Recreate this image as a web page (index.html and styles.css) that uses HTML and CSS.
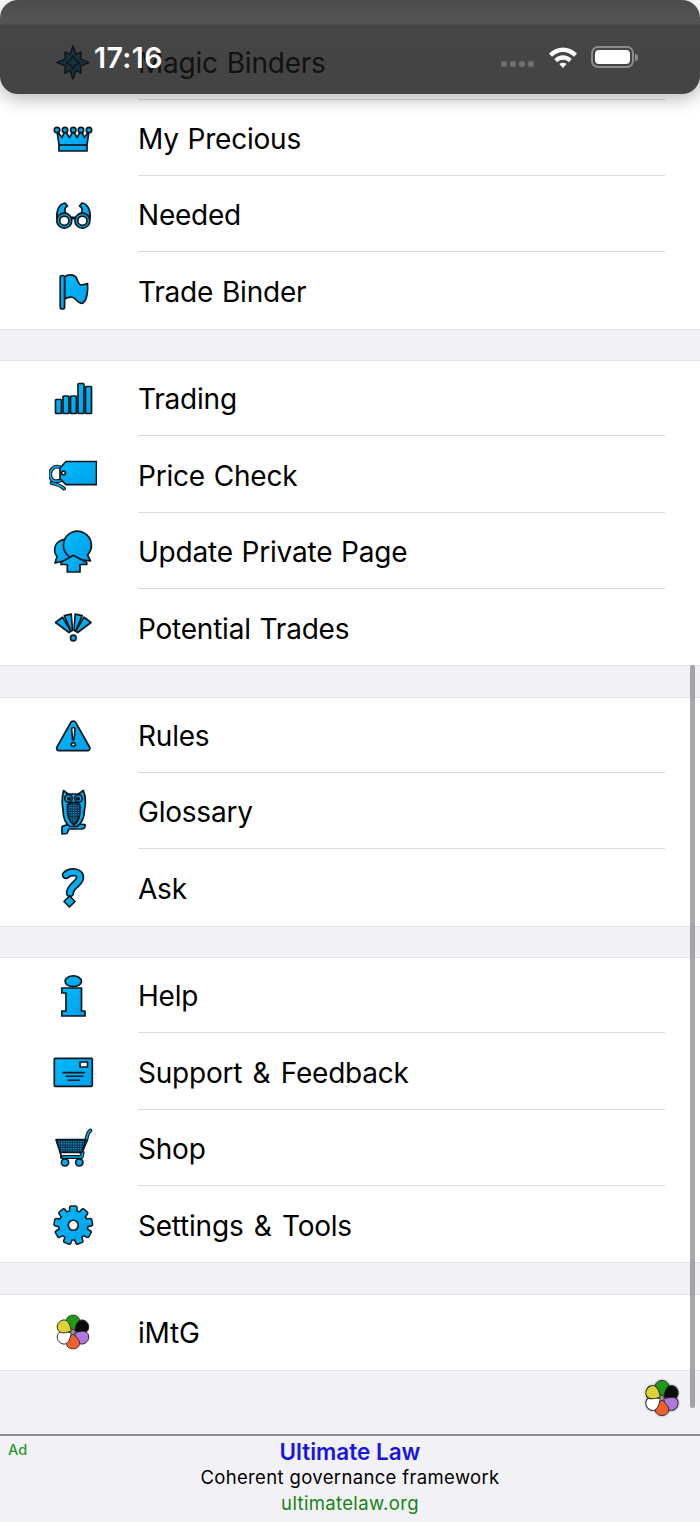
FILE: index.html
```html
<!DOCTYPE html>
<html lang="en">

<head>
  <meta charset="UTF-8">
  <meta name="viewport" content="width=device-width, initial-scale=1.0">
  <title>iMtG Menu</title>
  <link rel="stylesheet" href="styles.css">
</head>

<body>
  <!-- shared paint and shapes for the icons -->
  <svg class="defs" width="0" height="0">
    <defs>
      <linearGradient id="blue" x1="0" y1="0" x2="1" y2="1">
        <stop offset="0" stop-color="#00bcfd" />
        <stop offset="1" stop-color="#009fe8" />
      </linearGradient>
      <pattern id="hatch" width="2.4" height="2.4" patternUnits="userSpaceOnUse">
        <rect width="2.4" height="2.4" fill="#0a2c40" />
        <rect width="1.3" height="1.3" fill="#00a8f0" />
      </pattern>
      <path id="petal" d="M0 -2 C-2.5 -4.5 -6.8 -7.5 -6.8 -11.8 C-6.8 -15 -3.3 -17.6 0 -17.6 C3.3 -17.6 6.8 -15 6.8 -11.8 C6.8 -7.5 2.5 -4.5 0 -2 Z" />
      <symbol id="flower" viewBox="-18 -18 36 36">
        <circle r="3" fill="#999" />
        <g stroke="#222" stroke-width="0.9">
          <use href="#petal" fill="#1f9a12" />
          <use href="#petal" fill="#0c0c0c" transform="rotate(60)" />
          <use href="#petal" fill="#b078de" transform="rotate(120)" />
          <use href="#petal" fill="#f0602a" transform="rotate(180)" />
          <use href="#petal" fill="#ffffff" transform="rotate(240)" />
          <use href="#petal" fill="#dcd232" transform="rotate(300)" />
        </g>
      </symbol>
      <g id="cog">
        <circle cx="24.3" cy="24.25" r="14" />
        <g id="cogTeeth">
          <rect x="21.3" y="5.8" width="6" height="8" rx="1" />
          <rect x="21.3" y="5.8" width="6" height="8" rx="1" transform="rotate(40 24.3 24.25)" />
          <rect x="21.3" y="5.8" width="6" height="8" rx="1" transform="rotate(80 24.3 24.25)" />
          <rect x="21.3" y="5.8" width="6" height="8" rx="1" transform="rotate(120 24.3 24.25)" />
          <rect x="21.3" y="5.8" width="6" height="8" rx="1" transform="rotate(160 24.3 24.25)" />
          <rect x="21.3" y="5.8" width="6" height="8" rx="1" transform="rotate(200 24.3 24.25)" />
          <rect x="21.3" y="5.8" width="6" height="8" rx="1" transform="rotate(240 24.3 24.25)" />
          <rect x="21.3" y="5.8" width="6" height="8" rx="1" transform="rotate(280 24.3 24.25)" />
          <rect x="21.3" y="5.8" width="6" height="8" rx="1" transform="rotate(320 24.3 24.25)" />
        </g>
      </g>
    </defs>
  </svg>

  <main class="menu">
    <section class="group firstGroup">
      <div class="row">
        <svg class="icon" viewBox="0 0 48 48">
          <polygon points="24,8 27,16.5 32,14 31.5,21 40,24.5 31.5,28 32,35 27,32.5 24,41 21,32.5 16,35 16.5,28 8,24.5 16.5,21 16,14 21,16.5" />
          <polygon points="24,18 26.5,22 31,24.5 26.5,27 24,31 21.5,27 17,24.5 21.5,22" />
        </svg>
        <div class="rowBody">Magic Binders</div>
      </div>
      <div class="row">
        <svg class="icon" viewBox="0 0 48 48">
          <path d="M10 36 L10 30 L8 16 L13 22.5 L16 16 L20.5 22.5 L24.3 16 L28 22.5 L32 16 L35.5 22.5 L40 16 L38 30 L38 36 Z" />
          <path d="M10 30 H38" />
          <circle cx="8" cy="15" r="2.7" />
          <circle cx="16" cy="15" r="2.7" />
          <circle cx="24.3" cy="15" r="2.7" />
          <circle cx="32" cy="15" r="2.7" />
          <circle cx="40" cy="15" r="2.7" />
        </svg>
        <div class="rowBody">My Precious</div>
      </div>
      <div class="row">
        <svg class="icon" viewBox="0 0 48 48">
          <path d="M8 28 C7 20 10 13 16 12 L18.5 15 C14.5 17 15 21 19 25 L14 24 L10.5 27 Z" />
          <path d="M41 28 C42 20 39 13 33 12 L30.5 15 C34.5 17 34 21 30 25 L35 24 L38.5 27 Z" />
          <path d="M21 27 H28" class="thick" />
          <circle cx="15.3" cy="29.7" r="7.5" />
          <circle cx="15.3" cy="29.7" r="4.6" class="white" />
          <circle cx="33.4" cy="29.7" r="7.5" />
          <circle cx="33.4" cy="29.7" r="4.6" class="white" />
        </svg>
        <div class="rowBody">Needed</div>
      </div>
      <div class="row">
        <svg class="icon" viewBox="0 0 48 48">
          <path d="M15.5 10 C19 7 25 7 27.5 11 C29 15 30 18 32 18 C34 18 37 17 38.5 16.5 C39 22 38.5 33 34 36 C29 38 28 32 24 30.5 C21 29.5 18 30.5 15.5 32 Z" />
          <rect x="11.2" y="8.5" width="4.4" height="33.5" rx="2" />
        </svg>
        <div class="rowBody">Trade Binder</div>
      </div>
    </section>

    <section class="group">
      <div class="row">
        <svg class="icon" viewBox="0 0 48 48">
          <rect x="6.5" y="24.5" width="6" height="14" rx="0.8" />
          <rect x="14" y="21" width="6" height="17.5" rx="0.8" />
          <rect x="21.5" y="21" width="6" height="17.5" rx="0.8" />
          <rect x="29" y="8.5" width="6" height="30" rx="0.8" />
          <rect x="36.5" y="11.5" width="6" height="27" rx="0.8" />
        </svg>
        <div class="rowBody">Trading</div>
      </div>
      <div class="row">
        <svg class="icon" viewBox="0 0 48 48">
          <path d="M13 17 C5 13 0 19 1.5 26 C2.5 31 8 31 13 29 M2.5 32 C7 33 12 35 15 37.5" class="hookOuter thin" />
          <path d="M13 17 C5 13 0 19 1.5 26 C2.5 31 8 31 13 29 M2.5 32 C7 33 12 35 15 37.5" class="hookInner thin" />
          <path d="M17 10.5 H47.5 V33.7 H17 L11 27.7 V17 Z" />
          <circle cx="14.5" cy="22" r="1.9" class="white" />
        </svg>
        <div class="rowBody">Price Check</div>
      </div>
      <div class="row">
        <svg class="icon" viewBox="0 0 48 48">
          <path d="M6 35 L8 28.5 A10.5 10.5 0 1 1 20 31.7 Z" />
          <path d="M41.5 33 L38.5 27 A14 14 0 1 0 29 31.3 Z" />
          <path d="M24.3 27.2 L37.7 34.5 V36.5 H31 V44 H18.3 V36.5 H12 V34.5 Z" />
        </svg>
        <div class="rowBody">Update Private Page</div>
      </div>
      <div class="row">
        <svg class="icon" viewBox="0 0 48 48">
          <polygon points="6.5,18.5 13.5,13.3 22,27 20,28.5" />
          <polygon points="15.3,11.6 22.2,10.2 23.6,26.5 21.8,27" />
          <polygon points="26.2,10.2 33.2,11.6 26.8,27 25,26.5" />
          <polygon points="35,13.3 42,18.5 28.6,28.5 26.6,27" />
          <circle cx="24.3" cy="34" r="2.8" />
        </svg>
        <div class="rowBody">Potential Trades</div>
      </div>
    </section>

    <section class="group">
      <div class="row">
        <svg class="icon" viewBox="0 0 48 48">
          <path d="M24.3 9 C25.5 9 26.5 10 27 11 L40.5 35 C41.5 37 40.5 38.7 38.5 38.7 H10 C8 38.7 7 37 8 35 L21.5 11 C22 10 23 9 24.3 9 Z" />
          <path d="M22.6 17 C22.6 15 26 15 26 17 L25 28 H23.6 Z" class="white" />
          <circle cx="24.3" cy="32.5" r="1.9" class="white" />
        </svg>
        <div class="rowBody">Rules</div>
      </div>
      <div class="row">
        <svg class="icon" viewBox="0 0 48 48">
          <path d="M13 38.5 C18 36 30 36 36 36.5 C37 39 35 41 32 41 L20 41 L18 45.5 L13 46 Z" />
          <path d="M14.5 2.5 L19 6 H29.5 L34.3 2.5 L36 8 C37 14 36.5 18 35.5 22 C35.5 28 33 35 28 38.5 H21 C16 36 14 28 14 22 C13 17 12.5 12 14.5 2.5 Z" />
          <path d="M18.5 17 C21 13.5 28 13.5 30.8 17 C31.5 24 30.5 33 25 37 C19.5 33 18 24 18.5 17 Z" class="hatchFill" />
          <circle cx="19.5" cy="10.5" r="3.8" />
          <circle cx="29.5" cy="10.5" r="3.8" />
          <circle cx="20" cy="10.8" r="1.2" class="dark" />
          <circle cx="29" cy="10.8" r="1.2" class="dark" />
        </svg>
        <div class="rowBody">Glossary</div>
      </div>
      <div class="row">
        <svg class="icon" viewBox="0 0 48 48">
          <path d="M17 11 C21 7 32 7 31 14 C30 20 21 22 21 29" class="hookOuter" />
          <path d="M17 11 C21 7 32 7 31 14 C30 20 21 22 21 29" class="hookInner" />
          <polygon points="20.5,32 26,37.5 20.5,43 15,37.5" />
        </svg>
        <div class="rowBody">Ask</div>
      </div>
    </section>

    <section class="group">
      <div class="row">
        <svg class="icon" viewBox="0 0 48 48">
          <ellipse cx="24.3" cy="9.3" rx="8.2" ry="5.4" />
          <path d="M12.8 16 H32.5 V39 H36 V44 H12.8 V39 H17 V21 H12.8 Z" />
        </svg>
        <div class="rowBody">Help</div>
      </div>
      <div class="row">
        <svg class="icon" viewBox="0 0 48 48">
          <rect x="5.3" y="10.3" width="38" height="28" rx="1" />
          <rect x="31" y="14" width="7.5" height="5" class="white" />
          <path d="M13.3 24.6 H36 M16.7 28.3 H34.3 M18.7 32.3 H31" class="line" />
        </svg>
        <div class="rowBody"><span>Support <span class="amp">&amp;</span> Feedback</span></div>
      </div>
      <div class="row">
        <svg class="icon" viewBox="0 0 48 48">
          <path d="M12.7 33 H32.7 L33.8 28.5 M32 28.4 L37.4 15.5 C38 12 39 8 41.5 6.5" class="hookOuter thin" />
          <path d="M12.7 33 H32.7 L33.8 28.5 M32 28.4 L37.4 15.5 C38 12 39 8 41.5 6.5" class="hookInner thin" />
          <path d="M7 15.7 H37 L32.7 28.4 H11 L12.7 33 Z" class="hatchFill" />
          <circle cx="16" cy="38.4" r="3.6" />
          <circle cx="30.3" cy="38.4" r="3.6" />
        </svg>
        <div class="rowBody">Shop</div>
      </div>
      <div class="row">
        <svg class="icon" viewBox="0 0 48 48">
          <use href="#cog" class="cogEdge" />
          <use href="#cog" class="cogFill" />
          <circle cx="24.3" cy="24.25" r="5" class="white" />
        </svg>
        <div class="rowBody"><span>Settings <span class="amp">&amp;</span> Tools</span></div>
      </div>
    </section>

    <section class="group">
      <div class="row">
        <svg class="flowerIcon" viewBox="0 0 48 48">
          <use href="#flower" x="6.5" y="6.5" width="35" height="35" />
        </svg>
        <div class="rowBody">iMtG</div>
      </div>
    </section>

    <div class="menuFooter">
      <svg class="footerFlower" viewBox="0 0 36 36">
        <use href="#flower" width="36" height="36" />
      </svg>
    </div>
  </main>

  <footer class="adBar">
    <span class="adTag">Ad</span>
    <div class="adTitle">Ultimate Law</div>
    <div class="adText">Coherent governance framework</div>
    <div class="adLink">ultimatelaw.org</div>
  </footer>

  <!-- things that lie over the list -->
  <div class="statusBar">
    <span class="time">17:16</span>
    <div class="statusIcons">
      <div class="dots"><i></i><i></i><i></i><i></i></div>
      <svg class="wifi" width="30" height="22" viewBox="0 0 30 22">
        <path d="M1 7.5 C9 -0.5 21 -0.5 29 7.5 L26 10.8 C19.5 4.5 10.5 4.5 4 10.8 Z" />
        <path d="M6.3 13 C11.5 8 18.5 8 23.7 13 L20.8 16.2 C17.5 13 12.5 13 9.2 16.2 Z" />
        <path d="M11.4 18 C13.5 16.3 16.5 16.3 18.6 18 L15 22 Z" />
      </svg>
      <div class="battery"><div class="batteryFill"></div></div>
      <div class="batteryNub"></div>
    </div>
  </div>
  <div class="scrollThumb"></div>
</body>

</html>
```

FILE: styles.css
```css
body {
  font-family: Inter, "Liberation Sans", sans-serif;
  margin: 0;
  padding: 0;
  height: 100vh;
  display: flex;
  flex-direction: column;
  background-color: #f1f1f6;
  color: #000;
  overflow: hidden;
}

.defs {
  display: block;
  width: 0;
  height: 0;
}

.menu {
  flex: 1;
  min-height: 0;
}

.group {
  background-color: #fff;
  margin-bottom: 32.3px;
  box-shadow: 0 0 0 1px #e4e4e8;
}

.firstGroup {
  padding-top: 23.4px;
}

.row {
  height: 76.33px;
  display: flex;
  align-items: center;
  padding-left: 49px;
}

/* the top row of a group sits a point shorter */
.group:not(.firstGroup) .row:first-child {
  height: 75.33px;
}

.icon,
.flowerIcon {
  width: 48px;
  height: 48px;
  flex-shrink: 0;
  margin-top: 1.5px;
  margin-right: 41px;
}

.group:not(.firstGroup) .row:first-child .icon,
.group:not(.firstGroup) .row:first-child .flowerIcon {
  margin-top: 0.5px;
}

.rowBody {
  flex: 1;
  height: 100%;
  margin-right: 35px;
  display: flex;
  align-items: center;
  padding-top: 3.5px;
  box-sizing: border-box;
  border-bottom: 1px solid #dcdce0;
  font-size: 28px;
  letter-spacing: -0.22px;
  word-spacing: 1.2px;
}

.group:not(.firstGroup) .row:first-child .rowBody {
  padding-top: 2.5px;
}

.row:last-child .rowBody {
  border-bottom: none;
}

.amp {
  margin: 0 1.5px;
}

/* Icon paint */
.icon * {
  fill: url(#blue);
  stroke: #10171c;
  stroke-width: 1.7;
  stroke-linejoin: round;
}

.icon .white {
  fill: #fff;
}

.icon .dark {
  fill: #10171c;
}

.icon .hatchFill {
  fill: url(#hatch);
}

.icon .line {
  fill: none;
  stroke-width: 1.6;
}

.icon .thick {
  fill: none;
  stroke-width: 3;
}

.icon .hookOuter {
  fill: none;
  stroke-width: 8.5;
  stroke-linecap: round;
}

.icon .hookInner {
  fill: none;
  stroke: #00aef4;
  stroke-width: 5.2;
  stroke-linecap: round;
}

.icon .hookOuter.thin {
  stroke-width: 3.8;
}

.icon .hookInner.thin {
  stroke-width: 1.6;
}

.icon .cogEdge {
  fill: #10171c;
  stroke: #10171c;
  stroke-width: 3;
}

.icon .cogFill {
  stroke: none;
}

.menuFooter {
  margin-top: -32.3px;
  height: 65px;
  display: flex;
  align-items: flex-start;
  justify-content: flex-end;
  padding-right: 20px;
}

.footerFlower {
  width: 36px;
  height: 36px;
  margin-top: 10.5px;
  filter: drop-shadow(0 0 1px rgba(0, 0, 0, 0.4));
}

/* Ad banner */
.adBar {
  position: relative;
  height: 88px;
  box-sizing: border-box;
  border-top: 2px solid #8e8e93;
  background-color: #f1f1f6;
  text-align: center;
}

.adTag {
  position: absolute;
  left: 8px;
  top: 5px;
  font-size: 14.5px;
  font-weight: 500;
  color: #2a9a2a;
}

.adTitle {
  height: 28px;
  line-height: 31px;
  font-size: 22.5px;
  font-weight: 600;
  color: #1616e0;
}

.adText {
  height: 26px;
  line-height: 27px;
  font-size: 18.5px;
  letter-spacing: 0.35px;
}

.adLink {
  height: 26px;
  line-height: 26px;
  font-size: 18.5px;
  letter-spacing: 0.35px;
  color: #148414;
}

/* Status bar over the list */
.statusBar {
  position: absolute;
  top: 0;
  left: 0;
  width: 100%;
  height: 94px;
  box-sizing: border-box;
  padding: 20px 62px 0 94px;
  display: flex;
  align-items: center;
  justify-content: space-between;
  color: #fff;
  border-radius: 18px;
  background: linear-gradient(rgba(30, 30, 32, 0.8), rgba(42, 42, 44, 0.8) 20px, rgba(40, 40, 42, 0.8) 24px, rgba(23, 23, 23, 0.8) 25px, rgba(21, 21, 21, 0.8));
  box-shadow: 0 5px 18px rgba(0, 0, 0, 0.28);
}

.time {
  font-size: 28.5px;
  font-weight: 600;
  letter-spacing: 0.4px;
}

.statusIcons {
  display: flex;
  align-items: center;
}

.dots {
  display: flex;
  gap: 3px;
  margin: 14px 14px 0 0;
}

.dots i {
  width: 6px;
  height: 6px;
  border-radius: 2px;
  background-color: #6e6e6e;
}

.wifi {
  fill: #fff;
  margin-right: 13px;
}

.battery {
  width: 43px;
  height: 22px;
  box-sizing: border-box;
  padding: 2px;
  border: 2px solid #8b8b8b;
  border-radius: 7px;
}

.batteryFill {
  height: 100%;
  background-color: #fff;
  border-radius: 4px;
}

.batteryNub {
  width: 3px;
  height: 7px;
  margin-left: 1px;
  background-color: #8b8b8b;
  border-radius: 0 3px 3px 0;
}

.scrollThumb {
  position: absolute;
  left: 689.5px;
  top: 665px;
  width: 5px;
  height: 743px;
  border-radius: 3px;
  background-color: rgba(120, 120, 128, 0.65);
}
```
